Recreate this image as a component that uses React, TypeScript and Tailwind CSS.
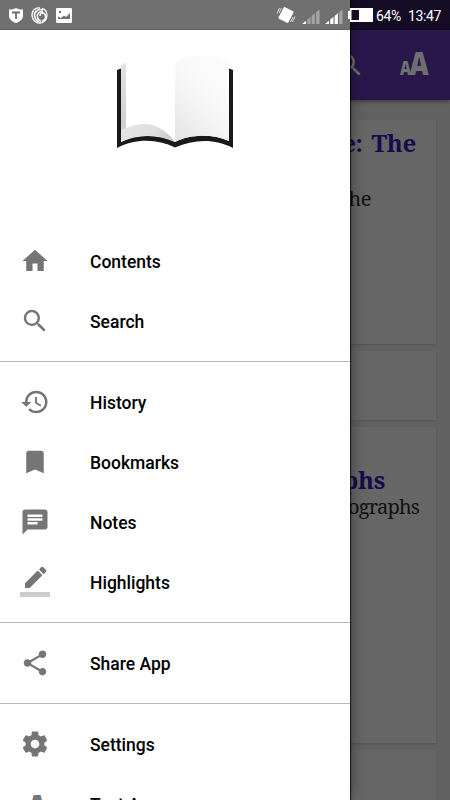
import { ReactNode } from "react";
import {
  MdBookmark,
  MdChat,
  MdHistory,
  MdHome,
  MdSearch,
  MdShare,
} from "react-icons/md";

// --- Types ---
interface DrawerItem {
  label: string;
  icon: ReactNode;
}

// --- Drawer entries, one array per group ---
const groups: DrawerItem[][] = [
  [
    { label: "Contents", icon: <MdHome size={30} /> },
    { label: "Search", icon: <MdSearch size={30} /> },
  ],
  [
    { label: "History", icon: <MdHistory size={30} /> },
    { label: "Bookmarks", icon: <MdBookmark size={30} /> },
    { label: "Notes", icon: <MdChat size={30} /> },
    { label: "Highlights", icon: <HighlightIcon /> },
  ],
  [{ label: "Share App", icon: <MdShare size={30} /> }],
  [
    { label: "Settings", icon: <SettingsIcon /> },
    {
      label: "Text Appearance",
      icon: (
        <span className="-ml-[2px] mr-[2px] pt-2">
          <TextSizeIcon />
        </span>
      ),
    },
  ],
];

function SettingsIcon() {
  return (
    <svg width="30" height="30" viewBox="0 0 24 24" fill="currentColor">
      <path d="M19.430 12.980c.04-.32.07-.64.07-.98s-.03-.66-.07-.98l2.110-1.650c.19-.15.24-.42.12-.64l-2-3.460c-.12-.22-.39-.3-.61-.22l-2.490 1c-.52-.4-1.080-.73-1.690-.98l-.38-2.650C14.460 2.180 14.250 2 14 2h-4c-.25 0-.46.18-.49.42l-.38 2.650c-.61.25-1.170.59-1.690.98l-2.490-1c-.23-.09-.49 0-.61.22l-2 3.460c-.13.22-.07.49.12.64l2.110 1.650c-.04.32-.07.65-.07.98s.03.66.07.98l-2.110 1.650c-.19.15-.24.42-.12.64l2 3.460c.12.22.39.3.61.22l2.490-1c.52.4 1.080.73 1.690.98l.38 2.650c.03.24.24.42.49.42h4c.25 0 .46-.18.49-.42l.38-2.650c.61-.25 1.170-.59 1.690-.98l2.490 1c.23.09.49 0 .61-.22l2-3.460c.12-.22.07-.49-.12-.64l-2.110-1.650zM12 15.500c-1.930 0-3.500-1.570-3.500-3.500s1.570-3.500 3.500-3.500 3.500 1.570 3.500 3.500-1.570 3.500-3.500 3.500z" />
    </svg>
  );
}

function HighlightIcon() {
  return (
    <svg width="30" height="30" viewBox="0 0 30 30" fill="currentColor">
      <path
        d="M5 18.3V23h4.7L22.4 10.3l-4.7-4.7zM26 6.7a1.2 1.2 0 0 0 0-1.7L23.1 2.1a1.2 1.2 0 0 0-1.7 0L19 4.5l4.7 4.7z"
        transform="translate(0 -2)"
      />
      <path d="M0 25h30v5H0z" fill="#cccccc" />
    </svg>
  );
}

function TextSizeIcon() {
  return (
    <svg
      width="30"
      height="30"
      viewBox="0 0 30 30"
      fill="currentColor"
      className="overflow-visible font-['Open_Sans',sans-serif] font-extrabold"
    >
      <text transform="translate(0 25) scale(0.76 1)" fontSize="20">A</text>
      <text transform="translate(9.500 25) scale(0.84 1)" fontSize="31.5">A</text>
    </svg>
  );
}

function BookLogo() {
  return (
    <svg width="120" height="96" viewBox="0 0 120 96">
      <defs>
        <linearGradient id="rightPage" x1="0.2" y1="1" x2="0.7" y2="0.2">
          <stop offset="0" stopColor="#e6e6e7" />
          <stop offset="0.5" stopColor="#f5f5f5" />
          <stop offset="1" stopColor="#fbfbfb" />
        </linearGradient>
        <linearGradient id="leftFold" x1="0" y1="0.3" x2="1" y2="0.6">
          <stop offset="0" stopColor="#e6e6e7" />
          <stop offset="0.6" stopColor="#dededf" />
          <stop offset="1" stopColor="#c9c9cb" />
        </linearGradient>
        <linearGradient id="edge" x1="0" y1="0" x2="0" y2="1">
          <stop offset="0" stopColor="#e3e3e4" />
          <stop offset="1" stopColor="#cacacc" />
        </linearGradient>
      </defs>
      <path
        d="M2 16l4-1.500V88C22 80 43 80 60 88C76 80 98 80 114 87V14.500l4 1.500V94C100 84.500 79 85 60 93.500C42 84.500 20 84.500 2 94z"
        fill="#191919"
      />
      <path d="M6 11.500L11 8.500V76L6 87z" fill="url(#edge)" />
      <path d="M6 87V76C8 75 9 75 11 74C30 66 46 70 60 87.500C43 79.500 22 80 6 87z" fill="url(#leftFold)" />
      <path d="M60 9.500C78 -1 98 0 114 8V87C98 80 76 80 60 88z" fill="url(#rightPage)" />
    </svg>
  );
}

// --- Status bar glyphs ---
function Signal({ weak }: { weak?: boolean }) {
  return (
    <svg width="18" height="15" viewBox="0 0 18 15">
      <path d="M0 15l4-3.300V15z" fill="#fff" />
      <path d="M5.200 10.600l3.300-2.700V15H5.200z" fill={weak ? "#a3a3a3" : "#fff"} />
      <path d="M9.600 7l3.300-2.700V15H9.600z" fill={weak ? "#a3a3a3" : "#fff"} />
      <path d="M14.100 3.200L17.500.4V15h-3.400z" fill="#a3a3a3" />
    </svg>
  );
}

function StatusBar() {
  return (
    <div className="absolute inset-x-0 top-0 z-30 flex h-[30px] items-center text-white">
      <div className="ml-[9px] flex w-[266px] items-center gap-2">
        <svg width="14" height="15" viewBox="0 0 14 15">
          <path d="M7 0c2 1 4.500 1.500 7 1.500V8c0 3-3 5.500-7 7C3 13.500 0 11 0 8V1.500C2.500 1.500 5 1 7 0z" fill="#fff" />
          <path d="M3 4.500h8M7 4.500V11" stroke="#707070" strokeWidth="1.800" />
        </svg>
        <svg width="17" height="17" viewBox="0 0 17 17" fill="none" stroke="#fff">
          <path d="M9 1C4 0 .8 4 1 8.500S5 16 8.500 16 16 13 16 8.500 13.500 2 11 1.500" strokeWidth="1.300" />
          <path d="M12 3C7 1.500 3 5 3.500 9s3 5 4.500 6M12 4.500C8 4 5.500 7 6.500 10.500S9 14 10 14M9 9c0-4 5-4 5.500 0S12 14 11 13.500" strokeWidth="1.500" />
        </svg>
        <svg width="16" height="15" viewBox="0 0 16 15">
          <rect width="16" height="15" rx="1.200" fill="#fff" />
          <path d="M2 11V8.500L5 10l3-2.500L10 9l4-4v6zM3 3h2v2H3z" fill="#707070" />
        </svg>
      </div>
      <svg width="20" height="18" viewBox="0 0 20 18" className="ml-[1px]">
        <rect x="4.500" y="2.500" width="11" height="13" rx="1" fill="#fff" transform="rotate(28 10 9)" />
        <path d="M3.500 2L1 7.500M5.500 2L3 7M16.500 16l2.500-5.500M14.500 16l2.500-5" stroke="#ddd" strokeWidth="1" />
      </svg>
      <div className="ml-[6px] flex gap-[5px] pt-[2px]">
        <Signal weak />
        <Signal />
      </div>
      <svg width="25" height="14" viewBox="0 0 25 14" className="ml-[5px]">
        <path d="M2 0h23v14H2v-3H0V3h2z" fill="#fff" />
        <path d="M3.500 2H11v10H3.500z" fill="#150b27" />
      </svg>
      <span className="ml-[3px] w-[32px] pt-[2px] text-[14px] tracking-[-0.4px]">64%</span>
      <span className="pt-[2px] text-[14px] tracking-[-0.4px]">13:47</span>
    </div>
  );
}

// --- Page behind the drawer, already dimmed ---
function Reader() {
  return (
    <div className="h-full bg-[#616161] font-['Noto_Serif','Liberation_Serif',serif]">
      <div className="h-[30px] bg-[#140b25]" />
      <header className="flex h-[70px] items-center justify-end bg-[#29174b] pr-5 text-[#6f6f6f] shadow-[0_2px_4px_rgba(0,0,0,0.35)]">
        <MdSearch size={30} className="mr-[35px]" />
        <TextSizeIcon />
      </header>
      <main className="flex flex-col gap-[7px] pl-3 pr-[14px] pt-5">
        <section className="h-[224px] bg-[#666666] pr-5 text-right shadow-[0_1px_2px_rgba(0,0,0,0.15)]">
          <h2 className="pt-[7px] text-[24px] font-bold leading-[31px] tracking-[-0.3px] text-[#150c4b] [word-spacing:3px]">
            e: The
          </h2>
          <p className="mr-[45px] mt-[27px] text-[20px] leading-7 tracking-[-0.4px] text-[#111]">the</p>
        </section>
        <section className="h-[69px] bg-[#666666] shadow-[0_1px_2px_rgba(0,0,0,0.15)]" />
        <section className="h-[316px] bg-[#666666] pt-[38px] text-right shadow-[0_1px_2px_rgba(0,0,0,0.15)]">
          <h2 className="mr-[51px] text-[24px] font-bold leading-[30px] tracking-[-0.3px] text-[#150c4b]">phs</h2>
          <p className="mr-[17px] text-[20px] leading-6 tracking-[-0.8px] text-[#111]">ographs</p>
        </section>
        <section className="h-[69px] bg-[#666666]" />
      </main>
    </div>
  );
}

export default function App() {
  return (
    <div className="relative h-[800px] w-[450px] overflow-hidden font-[Roboto,sans-serif]">
      <Reader />
      <aside className="absolute left-0 top-0 z-20 h-[800px] w-[350px] overflow-hidden bg-white shadow-[1px_0_1px_rgba(0,0,0,0.6),0_0_14px_rgba(0,0,0,0.45)]">
        <div className="h-[30px] border-b border-[#626262] bg-[#707070]" />
        <div className="flex h-[201px] justify-center pt-[24px]">
          <BookLogo />
        </div>
        <nav>
          {groups.map((items, i) => (
            <ul
              key={i}
              className="border-b border-[#b9b9b9] pb-[10px] pt-[10px] first:pt-0 last:border-b-0"
            >
              {items.map((item) => (
                <li key={item.label} className="flex h-[60px] items-center pl-5 text-[#757575]">
                  {item.icon}
                  <span className="ml-10 pt-[2px] text-[17.5px] font-medium text-black">{item.label}</span>
                </li>
              ))}
            </ul>
          ))}
        </nav>
      </aside>
      <StatusBar />
    </div>
  );
}
